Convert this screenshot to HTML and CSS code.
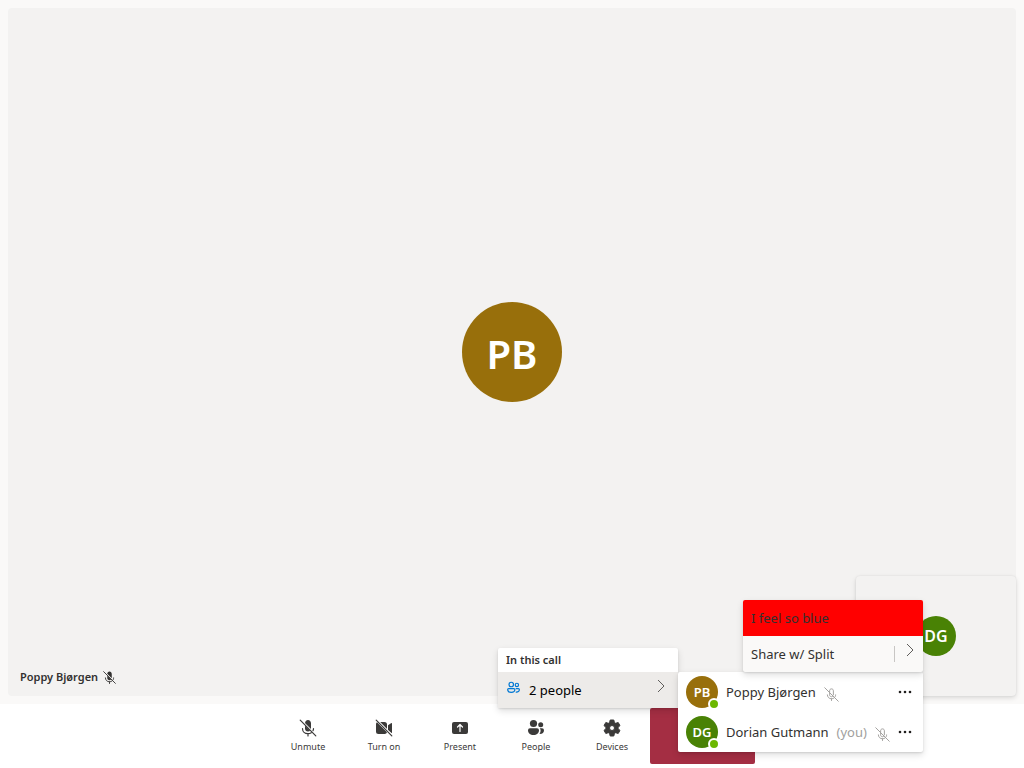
FILE: index.html
```html
<!DOCTYPE html>
<html lang="en">
<head>
<meta charset="utf-8">
<meta name="viewport" content="width=device-width, initial-scale=1">
<title>Call</title>
<link rel="stylesheet" href="styles.css">
</head>
<body>
<svg class="symbols" aria-hidden="true">
  <symbol id="mic-off" viewBox="0 0 20 20">
    <path fill="currentColor" d="M7 5.200C7 3.400 8.300 2 10 2s3 1.400 3 3.200V11L7 5zM7 7.600l5.200 5.200c-.6.500-1.300.8-2.200.8-1.700 0-3-1.300-3-3z"/>
    <path fill="none" stroke="currentColor" stroke-width="1.200" stroke-linecap="round" d="M4.500 10.500c0 3 2.300 5.200 5.500 5.200 1.300 0 2.400-.4 3.300-1M15.500 10.500c0 .8-.2 1.500-.5 2.200M10 15.700V18"/>
    <path fill="none" stroke="currentColor" stroke-width="1.200" stroke-linecap="round" d="M2.200 2.200l15.600 15.600"/>
  </symbol>
  <symbol id="mic-off-line" viewBox="0 0 20 20">
    <g fill="none" stroke="currentColor" stroke-width="1.300" stroke-linecap="round">
      <path d="M7.500 6.500V5C7.500 3.500 8.500 2.500 10 2.500s2.500 1 2.500 2.500v5.500M7.500 8v2.500c0 1.500 1 2.500 2.500 2.500.6 0 1.200-.2 1.600-.6M4.500 10.500c0 3 2.300 5.200 5.500 5.200 1.300 0 2.400-.4 3.300-1M15.500 10.500c0 .8-.2 1.500-.5 2.200M10 15.700V18"/>
      <path d="M1 1l18 18"/>
    </g>
  </symbol>
  <symbol id="chevron" viewBox="0 0 8 14">
    <path fill="none" stroke="currentColor" d="M1 1l6 6-6 6"/>
  </symbol>
  <symbol id="more" viewBox="0 0 14 4">
    <g fill="currentColor"><circle cx="2" cy="2" r="1.300"/><circle cx="7" cy="2" r="1.300"/><circle cx="12" cy="2" r="1.300"/></g>
  </symbol>
</svg>
<div class="call">
  <main class="stage">
    <section class="tile">
      <div class="avatar avatar-large gold">PB</div>
      <div class="tile-name">Poppy Bjørgen <svg class="icon-small" aria-hidden="true"><use href="#mic-off"/></svg></div>
      <div class="self-view"><div class="avatar avatar-medium green">DG</div></div>
    </section>
  </main>
  <footer class="bar">
    <button class="control"><svg class="icon" aria-hidden="true"><use href="#mic-off"/></svg>Unmute</button>
    <button class="control">
      <svg class="icon" viewBox="0 0 20 20" aria-hidden="true">
        <path fill="currentColor" d="M2 6a2.200 2.200 0 0 1 1-1.800L13 14.200A2.500 2.500 0 0 1 10.800 16H4.500A2.500 2.500 0 0 1 2 13.500zM6 4h4.500A2.500 2.500 0 0 1 13 6.500V11zM14 7.300l3-2.100c.5-.4 1-.1 1 .4v8.800c0 .5-.2.700-.5.700L14 12z"/>
        <path fill="none" stroke="#fff" stroke-width="1" d="M4 2.700L18 16.700"/>
        <path fill="none" stroke="currentColor" stroke-width="1.200" stroke-linecap="round" d="M2.200 2.200l15.600 15.600"/>
      </svg>Turn on</button>
    <button class="control">
      <svg class="icon" viewBox="0 0 20 20" aria-hidden="true">
        <rect x="2" y="4" width="16" height="12" rx="2" fill="currentColor"/>
        <path fill="none" stroke="#fff" stroke-width="1.200" stroke-linecap="round" stroke-linejoin="round" d="M10 13.500v-7M7.500 9L10 6.500 12.500 9"/>
      </svg>Present</button>
    <div class="menu-anchor">
      <button class="control" aria-expanded="true">
        <svg class="icon" viewBox="0 0 20 20" aria-hidden="true">
          <g fill="currentColor"><circle cx="7.500" cy="5.500" r="3.600"/><circle cx="14.700" cy="6.700" r="2.500"/>
          <path d="M4 10.200h7a2 2 0 0 1 2 2c0 3-2.300 4.800-5.500 4.800S2 15.200 2 12.200a2 2 0 0 1 2-2zM13.700 10.200H16a2 2 0 0 1 2 2c0 2.300-1.400 3.800-4.500 3.700.8-1 1.100-2.200 1.100-3.600 0-.8-.3-1.600-.9-2.100z"/></g>
        </svg>People</button>
      <div class="menu people-menu">
        <div class="menu-header">In this call</div>
        <div class="submenu-anchor">
          <button class="menu-item selected">
            <svg class="icon-small blue" viewBox="0 0 20 20" aria-hidden="true">
              <g fill="none" stroke="currentColor" stroke-width="1.600"><circle cx="7" cy="6" r="3"/><circle cx="14.500" cy="6.500" r="2.200"/>
              <path d="M3.500 11.500h7c.8 0 1.300.6 1.300 1.300 0 2.500-1.800 3.700-4.800 3.700s-4.800-1.200-4.800-3.700c0-.7.500-1.300 1.300-1.300zM13 11.500h3.500c.8 0 1.300.6 1.300 1.300 0 2.400-1.700 3.600-4.800 3.300"/></g>
            </svg>
            <span class="menu-label">2 people</span>
            <svg class="chevron" aria-hidden="true"><use href="#chevron"/></svg>
          </button>
          <div class="menu roster">
            <div class="person">
              <div class="avatar avatar-small gold">PB<span class="presence"></span></div>
              <span>Poppy Bjørgen</span>
              <svg class="icon-small muted" aria-hidden="true"><use href="#mic-off-line"/></svg>
              <button class="more" aria-label="More options"><svg aria-hidden="true"><use href="#more"/></svg></button>
            </div>
            <div class="person">
              <div class="avatar avatar-small green">DG<span class="presence"></span></div>
              <span>Dorian Gutmann</span>
              <span class="muted-text">(you)</span>
              <svg class="icon-small muted" aria-hidden="true"><use href="#mic-off-line"/></svg>
              <button class="more" aria-label="More options"><svg aria-hidden="true"><use href="#more"/></svg></button>
            </div>
            <div class="menu context-menu">
              <button class="menu-item red">I feel so blue</button>
              <div class="split">
                <button class="menu-item">Share w/ Split</button>
                <button class="split-more" aria-label="More sharing options"><svg class="chevron" aria-hidden="true"><use href="#chevron"/></svg></button>
              </div>
            </div>
          </div>
        </div>
      </div>
    </div>
    <button class="control">
      <svg class="icon" viewBox="0 0 20 20" aria-hidden="true">
        <path fill="currentColor" fill-rule="evenodd" stroke="currentColor" stroke-linejoin="round" d="M8.200 2h3.600l.6 2.500 1.300.8 2.500-.8L18 7.600l-1.900 1.700v1.400l1.900 1.700-1.800 3.100-2.500-.8-1.300.8-.6 2.500H8.200l-.6-2.500-1.300-.8-2.500.8L2 12.400l1.900-1.700V9.300L2 7.600l1.800-3.100 2.500.8 1.300-.8zM10 7.500a2.500 2.500 0 1 0 0 5 2.500 2.500 0 0 0 0-5z"/>
      </svg>Devices</button>
    <button class="leave" aria-label="Leave"></button>
  </footer>
</div>
</body>
</html>
```
FILE: styles.css
```css
* { box-sizing: border-box; }
body {
  margin: 0;
  font-family: "Noto Sans", "Open Sans", sans-serif;
  font-size: 13px;
  line-height: 20px;
  color: #323130;
}
button {
  font: inherit;
  color: inherit;
  margin: 0;
  padding: 0;
  border: 0;
  background: none;
  cursor: pointer;
}
svg { display: block; flex: none; }
.symbols { position: absolute; width: 0; height: 0; }

.call { display: flex; flex-direction: column; min-height: 100vh; }
.stage { flex: 1; display: flex; padding: 8px; background: #faf9f8; }
.tile {
  position: relative;
  flex: 1;
  display: flex;
  align-items: center;
  justify-content: center;
  border-radius: 4px;
  background: #f3f2f1;
}
.tile-name {
  position: absolute;
  left: 12px;
  bottom: 9px;
  display: flex;
  align-items: center;
  gap: 4px;
  font-size: 11px;
  font-weight: 600;
}
.self-view {
  position: absolute;
  right: 0;
  bottom: 0;
  width: 160px;
  height: 120px;
  display: flex;
  align-items: center;
  justify-content: center;
  border-radius: 4px;
  background: #f3f2f1;
  box-shadow: 0 2px 5px rgba(0, 0, 0, .13), 0 0 2px rgba(0, 0, 0, .08);
}

.avatar {
  position: relative;
  flex: none;
  display: flex;
  align-items: center;
  justify-content: center;
  border-radius: 50%;
  color: #fff;
  font-weight: 600;
}
.avatar-large { width: 100px; height: 100px; padding-top: 3px; font-size: 40px; }
.avatar-medium { width: 40px; height: 40px; font-size: 16px; }
.avatar-small { width: 32px; height: 32px; font-size: 13px; }
.gold { background: #986f0b; }
.green { background: #498205; }
.presence {
  position: absolute;
  right: -2px;
  bottom: -2px;
  width: 12px;
  height: 12px;
  border: 2px solid #fff;
  border-radius: 50%;
  background: #6bb700;
}

.bar { display: flex; justify-content: center; padding: 4px 0 4px 1px; background: #fff; }
.control {
  width: 76px;
  height: 56px;
  display: flex;
  flex-direction: column;
  align-items: center;
  gap: 1px;
  padding-top: 10px;
  font-size: 9px;
  line-height: 16px;
  color: #3b3a39;
}
.icon { width: 20px; height: 20px; }
.icon-small { width: 15px; height: 15px; }
.leave { width: 105px; height: 56px; border-radius: 2px; background: #a42e43; }

.menu {
  background: #fff;
  border-radius: 2px;
  box-shadow: 0 3px 7px rgba(0, 0, 0, .13), 0 1px 2px rgba(0, 0, 0, .11);
}
.menu-anchor, .submenu-anchor { position: relative; }
.people-menu { position: absolute; z-index: 1; left: 0; bottom: 56px; width: 180px; }
.menu-header { padding: 0 8px; line-height: 24px; font-size: 11px; font-weight: 600; }
.menu-item {
  width: 100%;
  height: 36px;
  display: flex;
  align-items: center;
  padding: 0 8px;
  text-align: left;
}
.selected { background: #edebe9; color: #000; }
.menu-label { flex: 1; padding-left: 8px; }
.chevron { width: 8px; height: 14px; margin: 0 5px 9px 0; color: #605e5c; }
.blue { color: #0078d4; margin-bottom: 5px; }
.roster { position: absolute; left: 100%; top: 0; width: 245px; }
.person { display: flex; align-items: center; gap: 8px; height: 40px; padding: 0 11px 0 8px; white-space: nowrap; }
.muted { width: 15px; height: 15px; margin-top: 4px; color: #a19f9d; }
.muted-text { color: #a19f9d; }
.more { margin-left: auto; padding: 8px 0; color: #201f1e; }
.more svg { width: 14px; height: 4px; }
.context-menu { position: absolute; right: 0; bottom: 100%; width: 180px; background: #faf9f8; overflow: hidden; }
.red { background: #f00; }
.split { display: flex; align-items: center; }
.split .menu-item { flex: 1; }
.split-more { display: flex; align-items: center; width: 29px; height: 16px; padding-left: 11px; border-left: 1px solid #c8c6c4; }
```
